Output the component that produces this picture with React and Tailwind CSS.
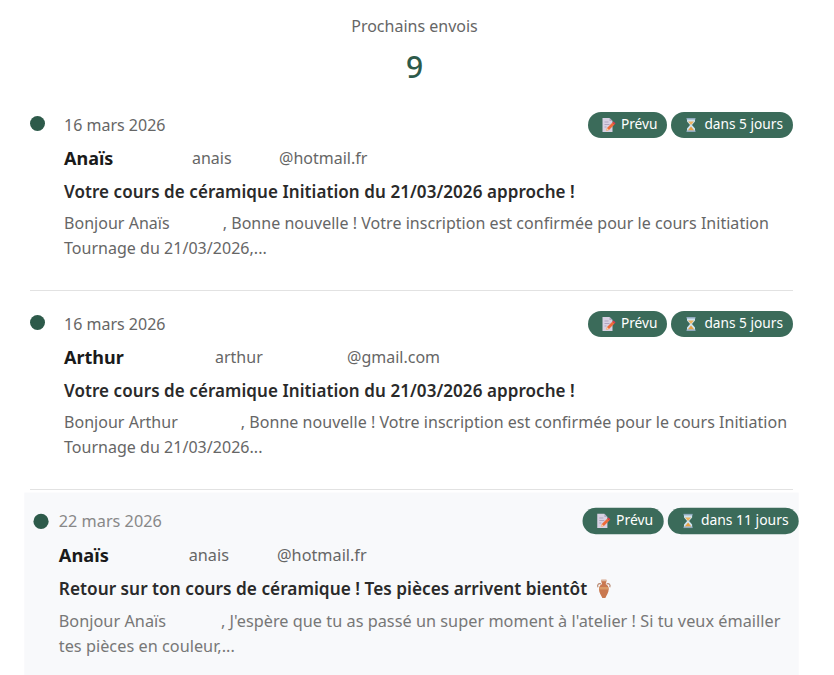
import React from "react";

const PencilDoc = () => (
  <svg width="16" height="16" viewBox="0 0 16 16" className="shrink-0">
    <path d="M2.500 1h7l3 3v11h-10z" fill="#d8d0e2" />
    <path d="M9.500 1l3 3h-3z" fill="#b3a8c2" />
    <path d="M4.500 5h4M4.500 7.500h5M4.500 10h2" stroke="#b0a4bf" strokeWidth="1" />
    <path d="M6 14l1-3 5.500-5.500 2 2-5.500 5.500z" fill="#ee6a3a" />
    <path d="M12.500 5.500l1-1 2 2-1 1z" fill="#e8364a" />
    <path d="M6 14l1-3 2 2z" fill="#f7cfa5" />
  </svg>
);

const Hourglass = () => (
  <svg width="16" height="16" viewBox="0 0 16 16" className="shrink-0">
    <path d="M4 2h8v2.500l-3 3.500 3 3.500v2.500h-8v-2.500l3-3.500-3-3.500z" fill="#cfe3ef" />
    <path d="M5 4.500h6l-3 3.500z" fill="#eeb35c" />
    <path d="M4.700 13.500l3.300-4 3.300 4z" fill="#e8a043" />
    <rect x="3.500" y="1" width="9" height="1.500" fill="#8fa9bd" />
    <rect x="3.500" y="13.500" width="9" height="1.500" fill="#8fa9bd" />
  </svg>
);

const Vase = () => (
  <svg width="16" height="20" viewBox="0 0 16 20" className="inline-block shrink-0">
    <path d="M5.500 1h5v2l-.7 2c2.200 1.200 3 3.200 3 5.300 0 3.500-2.300 6-3.300 8.700h-3c-1-2.700-3.300-5.200-3.300-8.700 0-2.100.8-4.100 3-5.300l-.7-2z" fill="#c9784f" />
    <path d="M5.500 1h5v1.500h-5z" fill="#dcb79f" />
    <path d="M3.700 8h8.600l.4 2.500h-9.400z" fill="#d99a66" />
    <path d="M5.200 5c-2.600-.8-4 .8-3 3.200M10.800 5c2.600-.8 4 .8 3 3.200" fill="none" stroke="#b98a72" strokeWidth="1.200" />
  </svg>
);

const Badge = ({ icon, children }) => (
  <span className="flex h-[26px] items-center gap-[5px] rounded-full bg-[#3b6b5a] pl-[12px] pr-[10px] text-[13.700px] text-white">
    {icon}
    {children}
  </span>
);

const rows = [
  {
    date: "16 mars 2026",
    name: "Anaïs",
    nameW: "w-[128px]",
    user: "anais",
    userW: "w-[87px]",
    domain: "@hotmail.fr",
    subject: "Votre cours de céramique Initiation du 21/03/2026 approche !",
    greet: "Bonjour Anaïs",
    greetW: "w-[53px]",
    line: ", Bonne nouvelle ! Votre inscription est confirmée pour le cours Initiation",
    rest: "Tournage du 21/03/2026,...",
    days: "dans 5 jours",
  },
  {
    date: "16 mars 2026",
    name: "Arthur",
    nameW: "w-[151px]",
    user: "arthur",
    userW: "w-[132px]",
    domain: "@gmail.com",
    subject: "Votre cours de céramique Initiation du 21/03/2026 approche !",
    greet: "Bonjour Arthur",
    greetW: "w-[63px]",
    line: ", Bonne nouvelle ! Votre inscription est confirmée pour le cours Initiation",
    rest: "Tournage du 21/03/2026...",
    days: "dans 5 jours",
  },
  {
    date: "22 mars 2026",
    name: "Anaïs",
    nameW: "w-[128px]",
    user: "anais",
    userW: "w-[87px]",
    domain: "@hotmail.fr",
    subject: "Retour sur ton cours de céramique ! Tes pièces arrivent bientôt",
    vase: true,
    greet: "Bonjour Anaïs",
    greetW: "w-[54px]",
    line: ", J'espère que tu as passé un super moment à l'atelier ! Si tu veux émailler",
    rest: "tes pièces en couleur,...",
    days: "dans 11 jours",
    hovered: true,
  },
];

const Row = ({ row }) => (
  <div className={row.hovered ? "mt-[4px] flex scale-[1.015] bg-[#f8f9fb] pb-[29px] pt-[14px]" : "mt-[5px] flex pb-[29px] pt-[14px]"}>
    <div className={row.hovered ? "ml-[9px] mt-[6.500px] h-[15px] w-[15px] shrink-0 rounded-full bg-[#2d5a4a]" : "mt-[5px] h-[15px] w-[15px] shrink-0 rounded-full bg-[#2d5a4a]"} />
    <div className={row.hovered ? "ml-[10px] min-w-0 flex-1" : "ml-[19px] min-w-0 flex-1"}>
      <div className="flex h-[28px] items-center justify-between">
        <span className={row.hovered ? "text-[16px] text-[#888888]" : "text-[16px] text-[#666666]"}>{row.date}</span>
        <div className="mb-[1px] flex gap-[4px]">
          <Badge icon={<PencilDoc />}>Prévu</Badge>
          <Badge icon={<Hourglass />}>{row.days}</Badge>
        </div>
      </div>
      <div className="mt-[5px] flex h-[28px] items-center">
        <span className={`${row.nameW} text-[18px] font-bold text-[#1a1a1a]`}>{row.name}</span>
        <span className={`${row.userW} text-[16px] text-[#666666]`}>{row.user}</span>
        <span className="text-[16px] text-[#666666]">{row.domain}</span>
      </div>
      <div className={row.hovered ? "mt-[6px] flex h-[28px] items-center gap-[8px] text-[17px] font-semibold text-[#2a2a2a]" : "mt-[6px] flex h-[28px] items-center gap-[8px] text-[17px] font-semibold tracking-[0.070px] text-[#2a2a2a]"}>
        {row.subject}
        {row.vase && <Vase />}
      </div>
      <div className={row.hovered ? "mt-[5px] text-[16px] leading-[25px] tracking-[0.030px] text-[#777777]" : "mt-[5px] text-[16px] leading-[25px] tracking-[0.030px] text-[#666666]"}>
        <div className="flex">
          <span>{row.greet}</span>
          <span className={row.greetW} />
          <span>{row.line}</span>
        </div>
        <div>{row.rest}</div>
      </div>
    </div>
  </div>
);

export default function App() {
  return (
    <div className="h-[675px] overflow-hidden bg-white pl-[30px] pr-[35px] font-['Noto_Sans',sans-serif]">
      <div className="pb-[5px] pt-[15px] text-center">
        <div className="text-[16px] leading-[22px] text-[#666666]">Prochains envois</div>
        <div className="mt-[10px] text-[30px] font-medium leading-[40px] text-[#2d5a4a]">9</div>
      </div>
      <div className="mr-[6px]">
        {rows.map((row, i) => (
          <div key={i}>
            <Row row={row} />
            {i < 2 && <div className="h-px bg-[#e2e2e2]" />}
          </div>
        ))}
      </div>
    </div>
  );
}
